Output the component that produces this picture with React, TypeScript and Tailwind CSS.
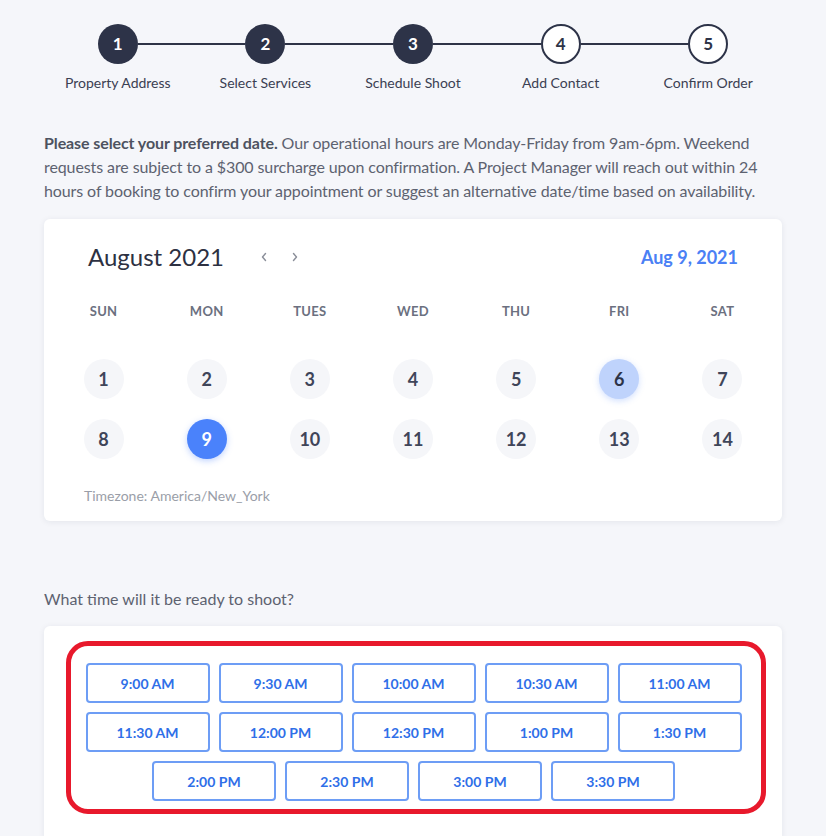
import React from 'react';

const STEPS = ['Property Address', 'Select Services', 'Schedule Shoot', 'Add Contact', 'Confirm Order'];
const WEEKDAYS = ['SUN', 'MON', 'TUES', 'WED', 'THU', 'FRI', 'SAT'];
const TIMES = [
  '9:00 AM', '9:30 AM', '10:00 AM', '10:30 AM', '11:00 AM',
  '11:30 AM', '12:00 PM', '12:30 PM', '1:00 PM', '1:30 PM',
  '2:00 PM', '2:30 PM', '3:00 PM', '3:30 PM',
];

function Stepper() {
  const current = 3;
  return (
    <div className="grid grid-cols-5 pt-6">
      {STEPS.map((label, i) => {
        const n = i + 1;
        const done = n <= current;
        return (
          <div key={label} className="flex flex-col items-center">
            <div className="flex w-full items-center">
              <div className={`h-[2px] flex-1 ${i === 0 ? '' : 'bg-[#2e3347]'}`} />
              <div
                className={`flex h-10 w-10 items-center justify-center rounded-full text-[17px] font-bold ${
                  done ? 'bg-[#2d3348] text-white' : 'border-2 border-[#2d3348] bg-white text-[#2d3348]'
                }`}
              >
                {n}
              </div>
              <div className={`h-[2px] flex-1 ${i === STEPS.length - 1 ? '' : 'bg-[#2e3347]'}`} />
            </div>
            <div className="mt-[9px] text-[14px] leading-5 text-[#3b4052]">{label}</div>
          </div>
        );
      })}
    </div>
  );
}

function Chevron({ dir }: { dir: 'left' | 'right' }) {
  return (
    <svg width="8" height="10" viewBox="0 0 8 10" fill="none" stroke="#8a8e99" strokeWidth="1.4" strokeLinecap="round" strokeLinejoin="round">
      {dir === 'left' ? <path d="M5.5 1.5 2.5 5l3 3.5" /> : <path d="M2.5 1.5 5.5 5l-3 3.5" />}
    </svg>
  );
}

function Calendar() {
  const days = Array.from({ length: 14 }, (_, i) => i + 1);
  return (
    <div className="mt-4 rounded-md bg-white pt-[22px] pb-[15px] shadow-[0_1px_6px_rgba(30,40,70,0.08)]">
      <div className="flex items-center justify-between px-11">
        <div className="flex items-center">
          <span className="text-[24px] leading-8 text-[#2d3142]">August 2021</span>
          <div className="ml-9 flex items-center gap-[23px]">
            <Chevron dir="left" />
            <Chevron dir="right" />
          </div>
        </div>
        <span className="text-[18px] font-bold leading-8 text-[#4a80f5]">Aug 9, 2021</span>
      </div>
      <div className="mt-[30px] grid grid-cols-7 px-2">
        {WEEKDAYS.map((d) => (
          <div key={d} className="text-center text-[13px] font-bold leading-4 tracking-wide text-[#6b7080]">
            {d}
          </div>
        ))}
      </div>
      <div className="mt-10 grid grid-cols-7 gap-y-5 px-2">
        {days.map((d) => {
          let cls = 'bg-[#f5f6f9] text-[#3f4559]';
          if (d === 9) cls = 'bg-[#4a82fb] text-white shadow-[0_2px_6px_rgba(74,130,251,0.35)]';
          if (d === 6) cls = 'bg-[#bfd3fc] text-[#2d3348] shadow-[0_2px_6px_rgba(74,130,251,0.25)]';
          return (
            <div key={d} className="flex justify-center">
              <div className={`flex h-10 w-10 items-center justify-center rounded-full text-[18px] font-bold ${cls}`}>
                {d}
              </div>
            </div>
          );
        })}
      </div>
      <div className="mt-[27px] pl-10 text-[14px] leading-5 text-[#9a9ea8]">Timezone: America/New_York</div>
    </div>
  );
}

function TimeSlots() {
  return (
    <div className="mt-[15px] rounded-t-md bg-white pt-[15px] pl-[22px] pr-4 pb-6 shadow-[0_1px_6px_rgba(30,40,70,0.08)]">
      <div className="rounded-[22px] border-[5px] border-[#e8192c] pt-[17px] pb-[8px] pl-[14px] pr-[19px]">
        <div className="flex flex-wrap justify-center gap-[9px]">
          {TIMES.map((t) => (
            <button
              key={t}
              className="h-10 w-[124px] rounded-[4px] border-2 border-[#6d9df5] bg-white text-[14px] font-bold text-[#2f6fe8]"
            >
              {t}
            </button>
          ))}
        </div>
      </div>
    </div>
  );
}

export default function App() {
  return (
    <div className="min-h-[836px] overflow-hidden bg-[#f5f6fa] font-['Lato','Liberation_Sans',sans-serif]">
      <div className="w-[738px] ml-11">
        <Stepper />
        <p className="mt-[38px] text-[16px] leading-6 tracking-[-0.1px] text-[#5d6270]">
          <span className="font-bold text-[#4d5260]">Please select your preferred date.</span> Our operational hours are
          Monday-Friday from 9am-6pm. Weekend requests are subject to a $300 surcharge upon confirmation. A Project
          Manager will reach out within 24 hours of booking to confirm your appointment or suggest an alternative
          date/time based on availability.
        </p>
        <Calendar />
        <p className="mt-[66px] text-[16px] leading-6 text-[#5d6270]">What time will it be ready to shoot?</p>
        <TimeSlots />
      </div>
    </div>
  );
}
